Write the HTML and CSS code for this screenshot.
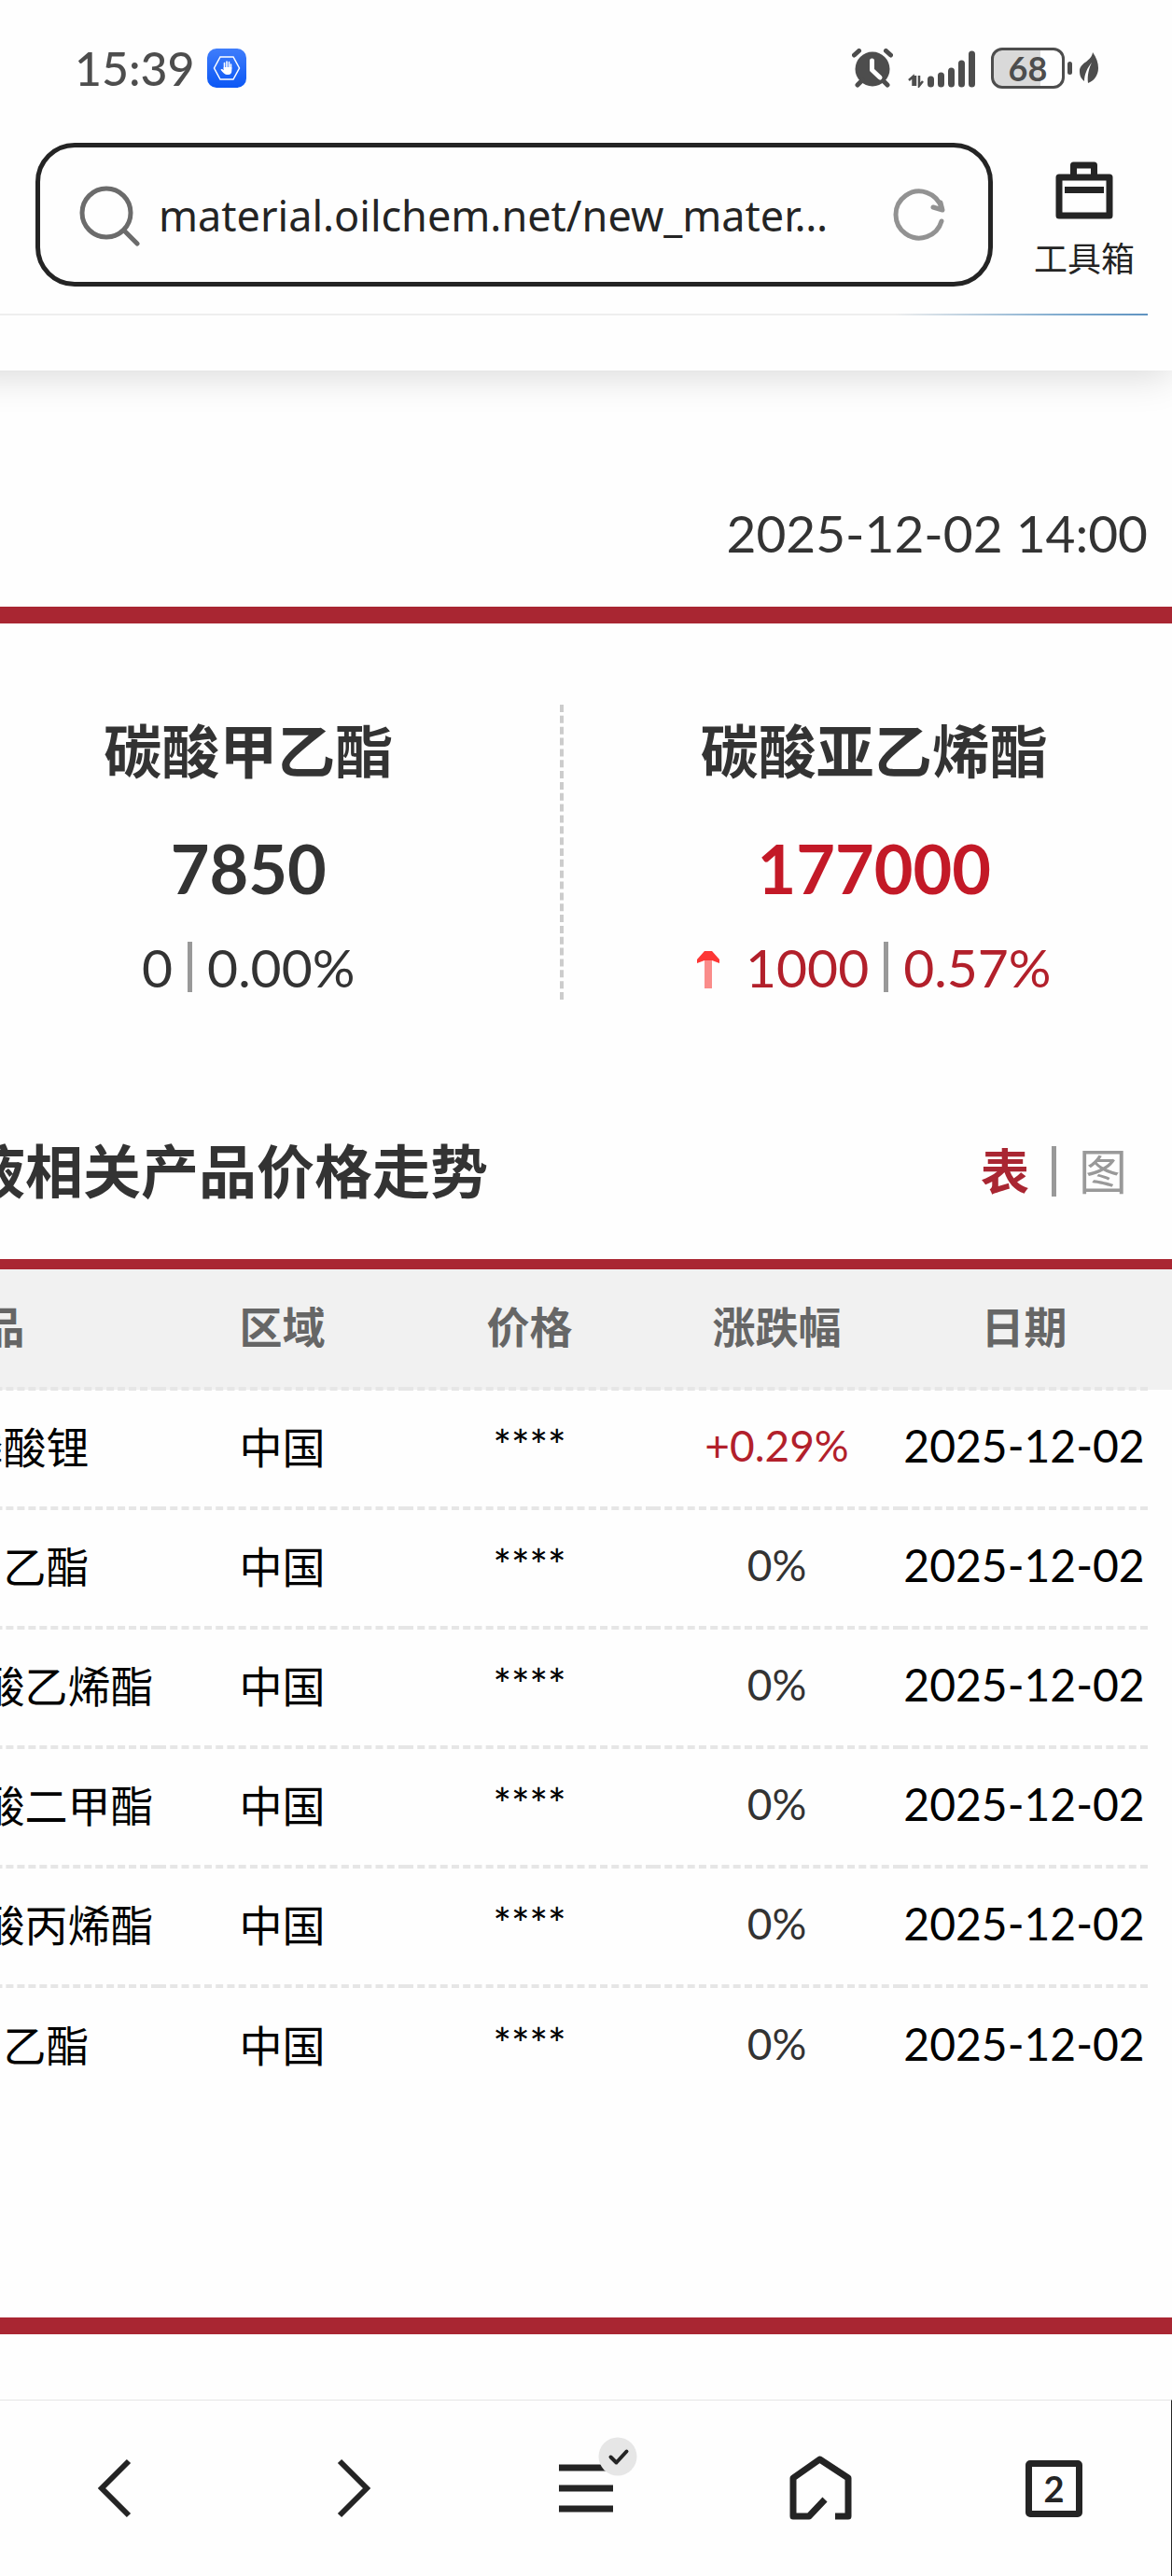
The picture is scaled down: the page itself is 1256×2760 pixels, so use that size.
FILE: index.html
```html
<!DOCTYPE html>
<html lang="zh-CN">
<head>
  <meta charset="UTF-8" />
  <meta name="viewport" content="width=device-width, initial-scale=1.0"/>
  <title>电解液相关产品价格走势</title>
  <link rel="stylesheet" href="styles.css">
</head>
<body>
  <header class="browser-top">
    <div class="status-bar">
      <span class="clock">15:39</span>
      <svg class="app-icon" width="42" height="42" viewBox="0 0 42 42">
        <defs>
          <linearGradient id="blue" x1="0" y1="0" x2="0" y2="1">
            <stop offset="0" stop-color="#3f7dfb"/>
            <stop offset="1" stop-color="#0b57f5"/>
          </linearGradient>
        </defs>
        <rect width="42" height="42" rx="10" fill="url(#blue)"/>
        <path d="M14 9h14l6.500 12-6.500 12H14L7.500 21z" fill="none" stroke="#fff" stroke-width="1.500"/>
        <path d="M18.500 22v-6.500M21 21v-7M23.500 21v-6.500M25.500 22v-5" stroke="#fff" stroke-width="1.600" stroke-linecap="round"/>
        <path d="M17.700 20h8.600v4c0 2.500-1.500 4-3.500 4h-2c-2 0-3.500-2-6.300-5.200.6-1.200 2-.8 3.200.4z" fill="#fff"/>
      </svg>
      <div class="status-icons">
        <svg width="44" height="42" viewBox="0 0 44 42">
          <circle cx="22" cy="22" r="18.500" fill="#4d4d4d"/>
          <path d="M2.500 7l5-4.500M41.500 7l-5-4.500M6 39l5-5M38 39l-5-5" stroke="#4d4d4d" stroke-width="5" stroke-linecap="round"/>
          <path d="M21.500 13v10l8.500 8" fill="none" stroke="#fff" stroke-width="5" stroke-linecap="round" stroke-linejoin="round"/>
        </svg>
        <svg class="signal" width="74" height="42" viewBox="0 0 74 42">
          <path d="M6.500 40V30L2 34M9 40V29M13 29v11l4-5" fill="none" stroke="#4d4d4d" stroke-width="2.500"/>
          <path d="M25.500 38v-5M36.500 38v-9M47.500 38v-14M58.500 38v-22M69.500 38v-32" stroke="#4d4d4d" stroke-width="7" stroke-linecap="round"/>
        </svg>
        <div class="battery"><span class="battery-level">68</span></div>
        <svg width="28" height="44" viewBox="0 0 28 44">
          <rect x="0" y="15" width="5" height="14" rx="2.500" fill="#4d4d4d"/>
        </svg>
        <svg class="leaf" width="22" height="36" viewBox="0 0 22 36">
          <path d="M15 1c4 6 6 11 6 17 0 8-5 14-11 16C9 26 11 18 14 12 9 18 6 25 6 32 2 29 1 25 1 21 1 12 14 11 15 1z" fill="#4d4d4d"/>
        </svg>
      </div>
    </div>

    <div class="address-row">
      <form class="address">
        <svg width="72" height="72" viewBox="0 0 72 72">
          <circle cx="32" cy="34" r="26" fill="none" stroke="#6b6b6b" stroke-width="5"/>
          <path d="M51 53l14 14" stroke="#6b6b6b" stroke-width="5" stroke-linecap="round"/>
        </svg>
        <input class="url" type="text" aria-label="网址" value="material.oilchem.net/new_mater…">
        <button class="reload" type="button" aria-label="刷新">
          <svg width="60" height="60" viewBox="0 0 60 60">
            <path d="M54 37A25 25 0 1 1 54 23" fill="none" stroke="#929292" stroke-width="5" stroke-linecap="round"/>
            <path d="M45 22l10 3-2-8" fill="none" stroke="#929292" stroke-width="5" stroke-linecap="round" stroke-linejoin="round"/>
          </svg>
        </button>
      </form>
      <button class="toolbox" type="button">
        <svg width="62" height="62" viewBox="0 0 62 62">
          <path d="M4 17h54v41H4zM19.500 17V4h22v13" fill="none" stroke="#242424" stroke-width="7" stroke-linejoin="round"/>
          <path d="M10 30.500h42" stroke="#242424" stroke-width="7"/>
        </svg>
        <span>工具箱</span>
      </button>
    </div>
    <div class="site-line"></div>
  </header>

  <main class="page">
    <div class="update-time">2025-12-02 14:00</div>

    <section class="quotes">
      <div class="quote">
        <h2 class="quote-name">碳酸甲乙酯</h2>
        <div class="quote-price">7850</div>
        <div class="quote-change"><span>0</span><i class="bar"></i><span>0.00%</span></div>
      </div>
      <div class="quote up">
        <h2 class="quote-name">碳酸亚乙烯酯</h2>
        <div class="quote-price">177000</div>
        <div class="quote-change">
          <svg class="arrow" width="24" height="40" viewBox="0 0 24 40">
            <path d="M8 9h8v31H8z" fill="#fa8c8a"/>
            <path d="M0 13V9L8 0h8l8 9v4l-8-3H8z" fill="#fd3735"/>
          </svg>
          <span>1000</span><i class="bar"></i><span>0.57%</span>
        </div>
      </div>
    </section>

    <section class="trend">
      <div class="trend-head">
        <h2 class="trend-title">电解液相关产品价格走势</h2>
        <div class="tabs">
          <button class="tab active" type="button">表</button>
          <i class="bar"></i>
          <button class="tab" type="button">图</button>
        </div>
      </div>
      <div class="table-wrap">
        <table class="price-table">
          <thead>
            <tr><th class="col-name">产品</th><th>区域</th><th>价格</th><th>涨跌幅</th><th>日期</th></tr>
          </thead>
          <tbody>
            <tr><td>六氟磷酸锂</td><td>中国</td><td class="price">****</td><td class="change up">+0.29%</td><td class="date">2025-12-02</td></tr>
            <tr><td>碳酸甲乙酯</td><td>中国</td><td class="price">****</td><td class="change">0%</td><td class="date">2025-12-02</td></tr>
            <tr><td>电池级碳酸乙烯酯</td><td>中国</td><td class="price">****</td><td class="change">0%</td><td class="date">2025-12-02</td></tr>
            <tr><td>电池级碳酸二甲酯</td><td>中国</td><td class="price">****</td><td class="change">0%</td><td class="date">2025-12-02</td></tr>
            <tr><td>电池级碳酸丙烯酯</td><td>中国</td><td class="price">****</td><td class="change">0%</td><td class="date">2025-12-02</td></tr>
            <tr><td>碳酸甲乙酯</td><td>中国</td><td class="price">****</td><td class="change">0%</td><td class="date">2025-12-02</td></tr>
          </tbody>
        </table>
      </div>
    </section>
    <section class="next-section"></section>
  </main>

  <nav class="bottom-nav">
    <button type="button" aria-label="后退">
      <svg width="72" height="72" viewBox="0 0 72 72"><path d="M48 7L19 36l29 29" fill="none" stroke="#242424" stroke-width="6"/></svg>
    </button>
    <button type="button" aria-label="前进">
      <svg width="72" height="72" viewBox="0 0 72 72"><path d="M23 7l29 29-29 29" fill="none" stroke="#242424" stroke-width="6"/></svg>
    </button>
    <button class="menu" type="button" aria-label="菜单">
      <svg width="72" height="72" viewBox="0 0 72 72"><path d="M7 14h58M7 36h58M7 58h58" stroke="#242424" stroke-width="7"/></svg>
      <svg class="menu-badge" width="42" height="42" viewBox="0 0 42 42">
        <circle cx="21" cy="21" r="20.500" fill="#e6e6e6"/>
        <path d="M13.500 21.500l6 6 11-12" fill="none" stroke="#242424" stroke-width="4" stroke-linecap="round" stroke-linejoin="round"/>
      </svg>
    </button>
    <button type="button" aria-label="主页">
      <svg width="72" height="72" viewBox="0 0 72 72"><path d="M52 66h14V25L35.500 5 7 25v41h17l17-18" fill="none" stroke="#242424" stroke-width="7" stroke-linejoin="round"/></svg>
    </button>
    <button type="button" aria-label="标签页"><span class="tab-count">2</span></button>
  </nav>
</body>
</html>
```
FILE: styles.css
```css
* {
  box-sizing: border-box;
}
body {
  margin: 0;
  min-height: 100vh;
  display: flex;
  flex-direction: column;
  overflow-x: hidden;
  font-family: Lato, "Noto Sans CJK SC", sans-serif;
  background: #fefefe;
  color: #333;
}
button {
  padding: 0;
  border: none;
  background: none;
  font-family: inherit;
  color: inherit;
}
svg {
  display: block;
}
h2 {
  margin: 0;
}

/* status bar and address bar */
.browser-top {
  position: relative;
  margin-left: -40px;
  padding-left: 40px;
  background: #fefefe;
  box-shadow: 0 4px 40px rgba(0, 0, 0, 0.16);
}
.status-bar {
  display: flex;
  align-items: center;
  height: 146px;
  padding: 0 78px 0 80px;
  color: #4d4d4d;
}
.clock {
  font-size: 50px;
  font-weight: 500;
  line-height: 60px;
}
.app-icon {
  margin-left: 13px;
}
.status-icons {
  display: flex;
  align-items: center;
  margin-left: auto;
}
.signal {
  margin: 0 16px 0 15px;
}
.battery {
  width: 79px;
  height: 44px;
  margin-right: 3px;
  border: 3px solid #4d4d4d;
  border-radius: 12px;
  background: linear-gradient(90deg, #d9d9d9 68%, transparent 68%);
  text-align: center;
}
.battery-level {
  font-size: 36px;
  font-weight: bold;
  line-height: 38px;
}
.leaf {
  margin-left: -16px;
}
.address-row {
  display: flex;
  align-items: center;
  gap: 44px;
  padding: 7px 40px 29px 38px;
}
.address {
  flex: 1;
  min-width: 0;
  display: flex;
  align-items: center;
  height: 154px;
  padding: 0 44px 0 39px;
  border: 5px solid #242424;
  border-radius: 42px;
}
.url {
  flex: 1;
  min-width: 0;
  padding: 0;
  margin-left: 16px;
  border: none;
  outline: none;
  background: none;
  font-family: "Noto Sans", sans-serif;
  font-size: 45px;
  color: #242424;
}
.toolbox {
  display: flex;
  flex-direction: column;
  align-items: center;
  gap: 18px;
  padding-top: 14px;
  font-size: 36px;
  line-height: 48px;
  color: #242424;
}
.site-line {
  height: 61px;
  margin-right: 26px;
  background: linear-gradient(90deg, #eee 78%, #84aed0 92%, #5f93c1) no-repeat;
  background-size: 100% 2px;
}

/* page is scrolled sideways, so its left part is cut off */
.page {
  flex: 1;
  display: flex;
  flex-direction: column;
  overflow: hidden;
}
.update-time {
  padding: 142px 26px 47px;
  font-size: 55px;
  line-height: 64px;
  text-align: right;
}
.quotes {
  display: flex;
  padding: 87px 0 0;
  border-top: 18px solid #a92632;
}
.quotes .quote {
  flex: 1;
  padding-bottom: 4px;
  text-align: center;
}
.quotes .quote:first-child {
  margin-left: -67px;
  border-right: 4px dashed #ccc;
}
.quotes .quote:last-child {
  margin-right: -14px;
}
.quote-name {
  font-size: 62px;
  line-height: 100px;
}
.quote-price {
  font-size: 72px;
  font-weight: bold;
  line-height: 150px;
}
.up .quote-price {
  color: #c31927;
}
.quote-change {
  display: flex;
  justify-content: center;
  align-items: center;
  gap: 16px;
  font-size: 57px;
  line-height: 62px;
}
.up .quote-change {
  color: #b2202b;
}
.bar {
  width: 5px;
  height: 54px;
  background: #999;
}
.arrow {
  margin: 6px 12px 0 0;
}
.trend-head {
  display: flex;
  justify-content: space-between;
  align-items: center;
  margin-left: -159px;
  padding: 139px 48px 49px 0;
  border-bottom: 11px solid #a92632;
}
.trend-title {
  font-size: 62px;
  line-height: 90px;
}
.tabs {
  display: flex;
  align-items: center;
  gap: 24px;
}
.tab {
  font-size: 52px;
  line-height: 60px;
  color: #999;
}
.tab.active {
  font-weight: bold;
  color: #a92632;
}
.table-wrap {
  padding-right: 26px;
  background: linear-gradient(#f1f1f1, #f1f1f1) no-repeat;
  background-size: 100% 129px;
}
.price-table {
  width: calc(100% + 209px);
  margin-left: -209px;
  table-layout: fixed;
  border-collapse: collapse;
  font-size: 46px;
  color: #000;
}
.price-table th,
.price-table td {
  height: 128px;
  padding: 0 0 8px;
  text-align: center;
  white-space: nowrap;
}
.price-table th {
  color: #666;
}
.price-table .col-name {
  width: 379px;
}
.price-table tr {
  border-bottom: 4px dashed #e6e6e6;
}
.price-table tbody tr:last-child {
  border-bottom: none;
}
.price-table .price {
  font-weight: 500;
}
.price-table .date {
  font-size: 48px;
}
.price-table .change {
  color: #333;
}
.price-table .change.up {
  color: #b2202b;
}
.next-section {
  flex: 1;
  margin-top: 227px;
  border-top: 18px solid #a92632;
}

/* browser toolbar */
.bottom-nav {
  display: flex;
  height: 189px;
  border-top: 1px solid #e6e6e6;
  border-right: 1px solid #242424;
}
.bottom-nav button {
  position: relative;
  flex: 1;
  display: flex;
  justify-content: center;
  align-items: center;
}
.menu-badge {
  position: absolute;
  left: calc(50% + 13px);
  top: 39px;
}
.tab-count {
  width: 61px;
  height: 61px;
  border: 7px solid #242424;
  border-radius: 5px;
  font-size: 38px;
  font-weight: bold;
  line-height: 46px;
  color: #242424;
}
```
